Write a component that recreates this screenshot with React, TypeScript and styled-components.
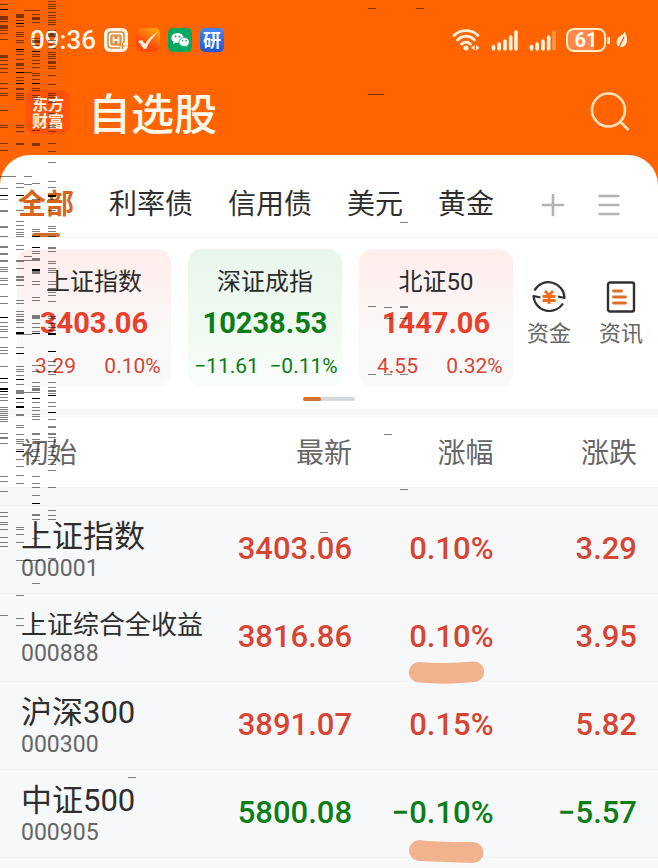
import React from 'react';
import styled, { createGlobalStyle, css } from 'styled-components';

const RED = '#d64534';
const GREEN = '#0b7d17';
const CJK = '"Noto Sans CJK SC", sans-serif';
const MIXED = 'Roboto, "Noto Sans CJK SC", sans-serif';

const GlobalStyle = createGlobalStyle`
  * { box-sizing: border-box; }
  html { background: #f7f8fa; }
  body { margin: 0; font-family: ${MIXED}; color: #2e2e2e; overflow: hidden; }
  button { border: 0; padding: 0; margin: 0; background: none; color: inherit; font: inherit; cursor: pointer; }
  svg { display: block; flex: none; }
`;

const Page = styled.div`
  position: relative;
  background: #ff6400;
`;

const StatusBar = styled.div`
  display: flex;
  align-items: center;
  justify-content: space-between;
  height: 80px;
  padding: 0 30px;
  color: #fff6e6;
`;

const StatusGroup = styled.div<{ $gap: number }>`
  display: flex;
  align-items: center;
  gap: ${(p) => p.$gap}px;
`;

const Clock = styled.time`
  font-size: 26px;
  font-weight: 500;
  line-height: 32px;
`;

const TitleBar = styled.header`
  display: flex;
  align-items: center;
  height: 75px;
  padding: 0 28px 11px 26px;
`;

const Brand = styled.div`
  display: flex;
  flex-direction: column;
  justify-content: center;
  width: 44px;
  height: 44px;
  border-radius: 8px;
  background: #ff530b;
  color: #fff3e4;
  font: 700 16px/17px ${CJK};
  text-align: center;
`;

const Title = styled.h1`
  flex: 1;
  margin: 0 0 2px 18px;
  color: #fff8ec;
  font: 500 43px/60px ${CJK};
`;

const Sheet = styled.main`
  border-radius: 30px 30px 0 0;
  background: #fff;
`;

const Tabs = styled.nav`
  display: flex;
  align-items: center;
  gap: 35px;
  height: 83px;
  padding: 12px 36px 0 18px;
  border-bottom: 1px solid #f3f3f3;
`;

const Tab = styled.button<{ $active?: boolean }>`
  position: relative;
  font-family: ${CJK};
  font-size: 28px;
  line-height: 40px;
  white-space: nowrap;
  ${(p) =>
    p.$active &&
    css`
      color: #d8641c;
      font-weight: 700;
      &::after {
        content: '';
        position: absolute;
        left: 14px;
        right: 14px;
        bottom: -15px;
        height: 4px;
        border-radius: 2px;
        background: #d07028;
      }
    `}
`;

const TabTools = styled.div`
  display: flex;
  gap: 30px;
  margin-left: auto;
  padding-top: 6px;
`;

const Overview = styled.section`
  display: flex;
  justify-content: space-between;
  padding: 11px 15px 0 17px;
`;

const Cards = styled.div`
  display: flex;
  gap: 17px;
`;

const Card = styled.article<{ $down?: boolean }>`
  width: 154px;
  height: 138px;
  padding-top: 17px;
  border-radius: 14px;
  text-align: center;
  color: ${(p) => (p.$down ? GREEN : RED)};
  background: ${(p) =>
    p.$down ? 'linear-gradient(#e9f6ec, #f0faf2 60%, #fafdfa)' : 'linear-gradient(#ffedeb, #faf7f7 55%, #fafafa)'};
`;

const CardName = styled.h2`
  margin: 0;
  color: #2a2a2a;
  font-size: 24px;
  font-weight: 400;
  line-height: 32px;
`;

const CardValue = styled.div<{ $down?: boolean }>`
  margin-top: 7px;
  color: ${(p) => (p.$down ? GREEN : '#e8402c')};
  font-size: 29px;
  font-weight: 700;
  line-height: 36px;
`;

const CardChange = styled.div`
  display: grid;
  grid-template-columns: 1fr 1fr;
  justify-items: center;
  margin-top: 12px;
  font-size: 21px;
  line-height: 26px;
  white-space: nowrap;
`;

const Shortcuts = styled.div`
  display: flex;
  gap: 28px;
  padding-top: 29px;
`;

const Shortcut = styled.button`
  display: flex;
  flex-direction: column;
  align-items: center;
  align-self: flex-start;
  gap: 2px;
  color: #666;
  font-size: 22px;
  line-height: 32px;
`;

const Pager = styled.div`
  width: 52px;
  height: 4px;
  margin: 10px auto 8px;
  border-radius: 2px;
  background: #d5d8dc;
  &::before {
    content: '';
    display: block;
    width: 18px;
    height: 4px;
    border-radius: 2px;
    background: #d8702e;
  }
`;

const Quotes = styled.table`
  width: 100%;
  border-top: 8px solid #f7f8fa;
  border-spacing: 0;
  table-layout: fixed;
  col:nth-child(1) { width: 32%; }
  col:nth-child(2) { width: 21.5%; }
  col:nth-child(3) { width: 21.5%; }
  td:last-child, th:last-child { padding-right: 21px; }
`;

const HeadCell = styled.th<{ $start?: boolean }>`
  height: 71px;
  padding: 0 0 2px ${(p) => (p.$start ? 21 : 0)}px;
  border-bottom: 1px solid #f2f3f4;
  color: #666;
  font: 400 28px/40px ${CJK};
  text-align: ${(p) => (p.$start ? 'left' : 'right')};
`;

const Spacer = styled.td`
  height: 17px;
  padding: 0;
  background: #f7f8fa;
`;

const NameCell = styled.th`
  height: 88px;
  padding: 0 0 0 21px;
  border-top: 1px solid #f0f1f3;
  background: #f7f8fa;
  font-weight: 400;
  text-align: left;
  white-space: nowrap;
`;

const StockName = styled.div<{ $small?: boolean }>`
  font-size: ${(p) => (p.$small ? 26 : 31)}px;
  line-height: ${(p) => (p.$small ? 32 : 38)}px;
`;

const Code = styled.div`
  color: #666;
  font-size: 23px;
  line-height: 26px;
`;

const NumberCell = styled.td<{ $down?: boolean }>`
  position: relative;
  padding: 0 0 2px;
  border-top: 1px solid #f0f1f3;
  background: #f7f8fa;
  color: ${(p) => (p.$down ? GREEN : RED)};
  font-size: 31px;
  font-weight: 500;
  line-height: 40px;
  text-align: right;
  white-space: nowrap;
`;

const Marker = styled.svg`
  position: absolute;
  z-index: 1;
  right: 8px;
  bottom: -7px;
`;

const EndRow = styled.div`
  height: 11px;
  border-top: 1px solid #f0f1f3;
  background: #f7f8fa;
`;

const Noise = styled.svg`
  position: absolute;
  z-index: 2;
  top: 0;
  left: 0;
  pointer-events: none;
`;

/* Scan-line noise: "y", "y*height" for thick ticks, trailing "d" for solid black. */
const noiseColumns: [number, string][] = [
  [0, '4 9d 16*4 21 25*4 30 33 39 55*3 60 64 68 72 83 88 93 95 110 125 127 143 150 176 188 195d 199 210*2 226*2 236 246*2 253*2 260*2 267 269 271 278 280 284 296 303 317d 322 326 329 331 337 347 350 353 366 378d 382 388*2d 391d 394 397 400 407 409 411 413 415 417 419 421 433 437*2 443 476 481 491 512 516 522 524 529 537 542 546 615'],
  [8, '176'],
  [16, '14*4 20 23d 26 32 34 36 40 42 49d 51 54 59 63*3 68 72d 77 80 83d 88*2 93 95 97 99 125 127 131 143*2 183 187 195d 210 221 225 229 232 234 236 245 249 260*2 268 276*2 279*2 285 300 303 311 314 316 319*2 322 327 332*2d 334 347 353d 366 369 371 375 379d 384 390*3 393 398d 402 406*2d 414*2 425 427 434 439 441 443 449 451d 459 466 475 483 527 529 534 542 560 595 618 625'],
  [24, '10 72 176 184 256 260 334 392 560'],
  [32, '10 14 17*3 22 38 40*3 45 51d 54 56 60 63 67 73 75 79 83d 88 90 95 97 99 130 143*3 183 199 229 231 236d 247d 251 253 258*3 269*2d 271*3 281 284 297 300 315*4 323 327 331 333d 365 371 382 386 388*3 392 398d 402 407 410 414 416 419 433*2 439 443 449 451 456 460 476 483 487 495 503d 514*2 519 538 560 583 625'],
  [48, '1 4 6 8 12 15 17 20 22 24 30 33*4 40 44 48 52 54 56 58 61*3 66 68 75 84 93 95 97 102 113 125 127 131 143 151 162 181 187 195*2d 199 210 226 228 231 236 247*2 251 261 263 268 270 272 281 284 288 292 295 301 316 318 323 327 330 333*2d 351d 361 365 371 374 382 387 390*2 393 395d 402 406 412d 419 426*2 433*2 437 441 447 451 455 459 464 470 487 510 515 519 558'],
  [368, '8 94 306 374'],
  [376, '94'],
  [384, '307 318 374 434'],
  [400, '222 306*2 318 374 489'],
  [416, '8'],
  [320, '532'],
  [128, '777'],
];

function NoiseLines() {
  return (
    <Noise width="658" height="868" aria-hidden="true" shapeRendering="crispEdges">
      {noiseColumns.flatMap(([x, ticks]) =>
        ticks.split(' ').map((tick) => {
          const [y, h = 1] = tick.replace('d', '').split('*').map(Number);
          return (
            <rect key={`${x}-${tick}`} x={x} y={y} width="8" height={h} fill="#000" opacity={tick.endsWith('d') ? 1 : 0.5} />
          );
        }),
      )}
    </Noise>
  );
}

const AppBadges = () => (
  <>
    <svg width="24" height="24" viewBox="0 0 24 24" fill="none">
      <rect width="24" height="24" rx="6" fill="#fff4df" />
      <path d="M16 20H7a3 3 0 0 1-3-3V7a3 3 0 0 1 3-3h10a3 3 0 0 1 3 3v8" stroke="#d58a43" strokeWidth="1.500" />
      <rect x="6.500" y="6.500" width="11" height="11" rx="2" fill="#dc8c42" />
      <path d="M9.500 8.500v7M14.500 8.500v7M9.500 12h5" stroke="#fff4df" strokeWidth="1.800" />
      <path d="M18.500 15v6M15.500 18h6" stroke="#d58a43" strokeWidth="1.200" />
    </svg>
    <svg width="24" height="24" viewBox="0 0 24 24">
      <defs>
        <linearGradient id="check" x1="0" y1="1" x2="0.6" y2="0">
          <stop offset="0.45" stopColor="#ff4b0b" />
          <stop offset="1" stopColor="#ff9d0b" />
        </linearGradient>
      </defs>
      <rect width="24" height="24" rx="5" fill="url(#check)" />
      <path d="M2 13l4-1 3 4C12 11 16 7 22 4 17 9 13 14 10 21H8z" fill="#fff0dc" />
    </svg>
    <svg width="24" height="24" viewBox="0 0 24 24">
      <rect width="24" height="24" rx="5" fill="#06a961" />
      <path d="M9.500 5C6 5 3.500 7.200 3.500 10c0 1.600.8 2.900 2.100 3.800L5 16l2.400-1.200 2.100.3c3.500 0 6.100-2.200 6.100-5S13 5 9.500 5z" fill="#fff" />
      <path d="M16.200 9.500c-3 0-5.300 2-5.300 4.500s2.300 4.500 5.300 4.500l1.800-.3 2 1.100-.5-1.900c1.200-.8 1.900-2 1.900-3.400 0-2.500-2.200-4.500-5.200-4.500z" fill="#fff" stroke="#06a961" strokeWidth="0.800" />
      <g fill="#06a961">
        <circle cx="7.500" cy="8.500" r="0.900" /><circle cx="11.500" cy="8.500" r="0.900" />
        <circle cx="14.500" cy="12.700" r="0.800" /><circle cx="18" cy="12.700" r="0.800" />
      </g>
    </svg>
  </>
);

const ResearchBadge = styled.span`
  width: 24px;
  height: 24px;
  border-radius: 5px;
  background: linear-gradient(#4388ef, #2057d8);
  color: #fff;
  font: 700 18px/23px ${CJK};
  text-align: center;
`;

const Wifi = () => (
  <svg width="28" height="24" viewBox="0 0 28 24" fill="none" stroke="#fff2dc" strokeWidth="2.800" strokeLinecap="round">
    <path d="M2 7.500C8.500 1 19.500 1 26 7.500M5.500 12c5-5 12-5 17 0M9.500 16.200c2.600-2.600 6.400-2.600 9 0" />
    <circle cx="14" cy="20" r="2.500" fill="#fff2dc" stroke="none" />
    <path d="M22.500 17v5.500L19 19.700zM24 17v5.500l3.500-2.800z" fill="#fff2dc" stroke="none" />
  </svg>
);

const Signal = ({ weak }: { weak?: boolean }) => (
  <svg width="28" height="24" viewBox="0 0 28 24" stroke="#fff2dc" strokeWidth="3.600" strokeLinecap="round">
    <path d="M3.500 18.500v2.500M9.200 16v5M15 13v8M20.700 9v12" />
    <path d="M26 4v17" opacity={weak ? 0.35 : 1} />
  </svg>
);

const Battery = styled.div`
  position: relative;
  width: 40px;
  height: 24px;
  border: 2px solid #ffe8c8;
  border-radius: 8px;
  background: linear-gradient(90deg, #ff8848 72%, transparent 72%);
  color: #fff8ec;
  font-size: 20px;
  font-weight: 700;
  line-height: 21px;
  text-align: center;
  &::after {
    content: '';
    position: absolute;
    right: -6px;
    top: 7px;
    width: 3px;
    height: 7px;
    border-radius: 1px;
    background: #ffe8c8;
  }
`;

const Leaf = () => (
  <svg width="12" height="18" viewBox="0 0 12 18">
    <path d="M8.500.5C11 4 12 9 10 13c-1.500 3-5 4-7.500 2.500C-.5 13 .5 8 3 6c2-1.700 4.500-2 5.500-5.500z" fill="#fff2dc" />
    <path d="M8 5.500C7 9 5 11 3 17" fill="none" stroke="#ff6400" strokeWidth="1.300" />
  </svg>
);

const IconButton = styled.button`
  display: block;
`;

const MoneyIcon = () => (
  <svg width="36" height="38" viewBox="0 0 36 38" fill="none" stroke="#303030" strokeWidth="2.200" strokeLinejoin="round">
    <path d="M3.500 12.500A16 16 0 0 1 33.500 20L27 18.500" />
    <path d="M9.500 19.500L2.500 18A16 16 0 0 0 32 25.500" />
    <path d="M14 13l4 4.500 4-4.500M11.500 18.500h13M11.500 22.500h13M18 18v8" stroke="#ef6c19" strokeWidth="2.800" />
  </svg>
);

const NewsIcon = () => (
  <svg width="36" height="38" viewBox="0 0 36 38" fill="none" strokeLinecap="round">
    <rect x="5" y="4.500" width="26" height="29" rx="2" stroke="#303030" strokeWidth="2.400" />
    <path d="M10.500 13h8M10.500 19h12M10.500 25h12" stroke="#dc712b" strokeWidth="2.800" />
  </svg>
);

const tabs = ['全部', '利率债', '信用债', '美元', '黄金'];

const cards = [
  { name: '上证指数', value: '3403.06', change: '3.29', percent: '0.10%' },
  { name: '深证成指', value: '10238.53', change: '−11.61', percent: '−0.11%', down: true },
  { name: '北证50', value: '1447.06', change: '4.55', percent: '0.32%' },
];

const quotes = [
  { name: '上证指数', code: '000001', last: '3403.06', percent: '0.10%', change: '3.29' },
  {
    name: '上证综合全收益', code: '000888', last: '3816.86', percent: '0.10%', change: '3.95', small: true,
    marker: 'M11 2Q38 4 66 1.500A10.250 10.250 0 0 1 66 22Q38 25 11 22.500A10.250 10.250 0 0 1 11 2z',
  },
  { name: '沪深300', code: '000300', last: '3891.07', percent: '0.15%', change: '5.82' },
  {
    name: '中证500', code: '000905', last: '5800.08', percent: '−0.10%', change: '−5.57', down: true,
    marker: 'M12 4Q22 6 65 6A10.500 10.500 0 0 1 65 27Q38 26 11 25A10.500 10.500 0 0 1 12 4z',
  },
];

export default function App() {
  return (
    <Page>
      <GlobalStyle />
      <StatusBar>
        <StatusGroup $gap={8}>
          <Clock>09:36</Clock>
          <AppBadges />
          <ResearchBadge>研</ResearchBadge>
        </StatusGroup>
        <StatusGroup $gap={10}>
          <Wifi />
          <Signal />
          <Signal weak />
          <Battery>61</Battery>
          <Leaf />
        </StatusGroup>
      </StatusBar>
      <TitleBar>
        <Brand>
          <span>东方</span>
          <span>财富</span>
        </Brand>
        <Title>自选股</Title>
        <IconButton aria-label="搜索">
          <svg width="40" height="40" viewBox="0 0 40 40" fill="none" stroke="#ffe2bd" strokeWidth="2.600">
            <circle cx="18.500" cy="18" r="16.500" />
            <path d="M30 29.500l8.500 8.500" />
          </svg>
        </IconButton>
      </TitleBar>
      <Sheet>
        <Tabs>
          {tabs.map((tab, i) => (
            <Tab key={tab} $active={i === 0}>{tab}</Tab>
          ))}
          <TabTools>
            <IconButton aria-label="添加分组">
              <svg width="26" height="26" viewBox="0 0 26 26" stroke="#b3b3b3" strokeWidth="2.600" strokeLinecap="round">
                <path d="M13 3v20M3 13h20" />
              </svg>
            </IconButton>
            <IconButton aria-label="菜单">
              <svg width="26" height="26" viewBox="0 0 26 26" stroke="#b3b3b3" strokeWidth="2.400" strokeLinecap="round">
                <path d="M3.500 4h19M3.500 13h19M3.500 22h19" />
              </svg>
            </IconButton>
          </TabTools>
        </Tabs>
        <Overview>
          <Cards>
            {cards.map((card) => (
              <Card key={card.name} $down={card.down}>
                <CardName>{card.name}</CardName>
                <CardValue $down={card.down}>{card.value}</CardValue>
                <CardChange>
                  <span>{card.change}</span>
                  <span>{card.percent}</span>
                </CardChange>
              </Card>
            ))}
          </Cards>
          <Shortcuts>
            <Shortcut><MoneyIcon />资金</Shortcut>
            <Shortcut><NewsIcon />资讯</Shortcut>
          </Shortcuts>
        </Overview>
        <Pager />
        <Quotes>
          <colgroup><col /><col /><col /><col /></colgroup>
          <thead>
            <tr>
              <HeadCell $start scope="col">初始</HeadCell>
              <HeadCell scope="col">最新</HeadCell>
              <HeadCell scope="col">涨幅</HeadCell>
              <HeadCell scope="col">涨跌</HeadCell>
            </tr>
          </thead>
          <tbody>
            <tr><Spacer colSpan={4} /></tr>
            {quotes.map((q) => (
              <tr key={q.code}>
                <NameCell scope="row">
                  <StockName $small={q.small}>{q.name}</StockName>
                  <Code>{q.code}</Code>
                </NameCell>
                <NumberCell $down={q.down}>{q.last}</NumberCell>
                <NumberCell $down={q.down}>
                  {q.percent}
                  {q.marker && (
                    <Marker width="77" height="28" viewBox="0 0 77 28" aria-hidden="true">
                      <path d={q.marker} fill="#f1b28e" />
                    </Marker>
                  )}
                </NumberCell>
                <NumberCell $down={q.down}>{q.change}</NumberCell>
              </tr>
            ))}
          </tbody>
        </Quotes>
        <EndRow />
      </Sheet>
      <NoiseLines />
    </Page>
  );
}
